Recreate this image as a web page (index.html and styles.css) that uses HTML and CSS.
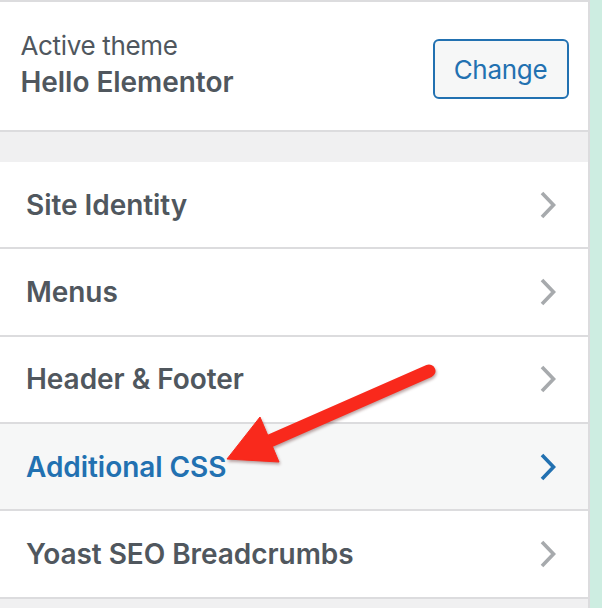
FILE: index.html
```html
<!DOCTYPE html>
<html lang="en">
<head>
<meta charset="utf-8">
<title>Customizer</title>
<link rel="stylesheet" href="styles.css">
</head>
<body>
<div class="page">
  <div class="panel">
    <div class="theme-section">
      <div class="theme-text">
        <div class="theme-label">Active theme</div>
        <div class="theme-name">Hello Elementor</div>
      </div>
      <button class="change-btn" type="button">Change</button>
    </div>
    <div class="spacer"></div>
    <ul class="sections">
      <li class="section-row"><span>Site Identity</span><svg class="chev" viewBox="0 0 16 28" width="16" height="28"><polyline points="2,2 13.5,14 2,26"/></svg></li>
      <li class="section-row"><span>Menus</span><svg class="chev" viewBox="0 0 16 28" width="16" height="28"><polyline points="2,2 13.5,14 2,26"/></svg></li>
      <li class="section-row"><span>Header &amp; Footer</span><svg class="chev" viewBox="0 0 16 28" width="16" height="28"><polyline points="2,2 13.5,14 2,26"/></svg></li>
      <li class="section-row is-active"><span>Additional CSS</span><svg class="chev" viewBox="0 0 16 28" width="16" height="28"><polyline points="2,2 13.5,14 2,26"/></svg></li>
      <li class="section-row"><span>Yoast SEO Breadcrumbs</span><svg class="chev" viewBox="0 0 16 28" width="16" height="28"><polyline points="2,2 13.5,14 2,26"/></svg></li>
    </ul>
  </div>
  <svg class="annotation" viewBox="0 0 602 608" width="602" height="608">
    <g class="arrow">
      <line x1="429" y1="371" x2="264" y2="443.5"/>
      <polygon points="227,459 260,417 270,440.6 279,462"/>
    </g>
  </svg>
</div>
</body>
</html>
```
FILE: styles.css
```css
html, body {
  margin: 0;
  padding: 0;
}
body {
  width: 602px;
  height: 608px;
  overflow: hidden;
  background: #cdede1;
  font-family: Inter, "Noto Sans", "Liberation Sans", sans-serif;
  color: #50575e;
}
.page {
  position: relative;
  width: 602px;
  height: 608px;
}
.panel {
  width: 590px;
  height: 608px;
  box-sizing: border-box;
  background: #f0f0f1;
  border-top: 2px solid #dcdcde;
  border-right: 2px solid #dcdcde;
}
.theme-section {
  height: 130px;
  box-sizing: border-box;
  background: #fff;
  border-bottom: 2px solid #dcdcde;
  display: flex;
  justify-content: space-between;
  align-items: flex-start;
  padding: 0 19.5px 0 20.5px;
}
.theme-text {
  padding-top: 28.5px;
}
.theme-label {
  font-size: 26px;
  line-height: 30px;
  font-weight: 400;
  letter-spacing: -0.35px;
}
.theme-name {
  font-size: 28px;
  line-height: 34px;
  font-weight: 600;
  margin-top: 4.7px;
  letter-spacing: -0.05px;
}
.change-btn {
  margin-top: 37.3px;
  width: 136px;
  height: 59.5px;
  box-sizing: border-box;
  border: 2px solid #2271b1;
  border-radius: 6px;
  background: #f6f7f7;
  color: #2271b1;
  font-family: inherit;
  font-size: 26px;
  font-weight: 400;
  letter-spacing: -0.3px;
  padding: 0;
  display: flex;
  align-items: center;
  justify-content: center;
}
.spacer {
  height: 30px;
}
.sections {
  list-style: none;
  margin: 0;
  padding: 0;
}
.section-row {
  height: 87.33px;
  box-sizing: border-box;
  border-bottom: 2px solid #dcdcde;
  background: #fff;
  display: flex;
  align-items: center;
  justify-content: space-between;
  padding: 0 32px 0 26px;
  font-size: 28px;
  font-weight: 600;
  letter-spacing: -0.05px;
  color: #50575e;
}
.section-row.is-active {
  background: #f6f7f7;
  color: #2271b1;
}
.chev {
  display: block;
  fill: none;
  stroke: #a7aaad;
  stroke-width: 3.6;
  stroke-linejoin: miter;
  stroke-linecap: butt;
}
.is-active .chev {
  stroke: #2271b1;
}
.annotation {
  position: absolute;
  top: 0;
  left: 0;
  pointer-events: none;
}
.arrow {
  filter: drop-shadow(1.5px 2.5px 1.5px rgba(60, 0, 0, 0.35));
}
.arrow line {
  stroke: #f9291c;
  stroke-width: 13;
  stroke-linecap: round;
}
.arrow polygon {
  fill: #f9291c;
  stroke: #f9291c;
  stroke-width: 1;
  stroke-linejoin: round;
}
```
